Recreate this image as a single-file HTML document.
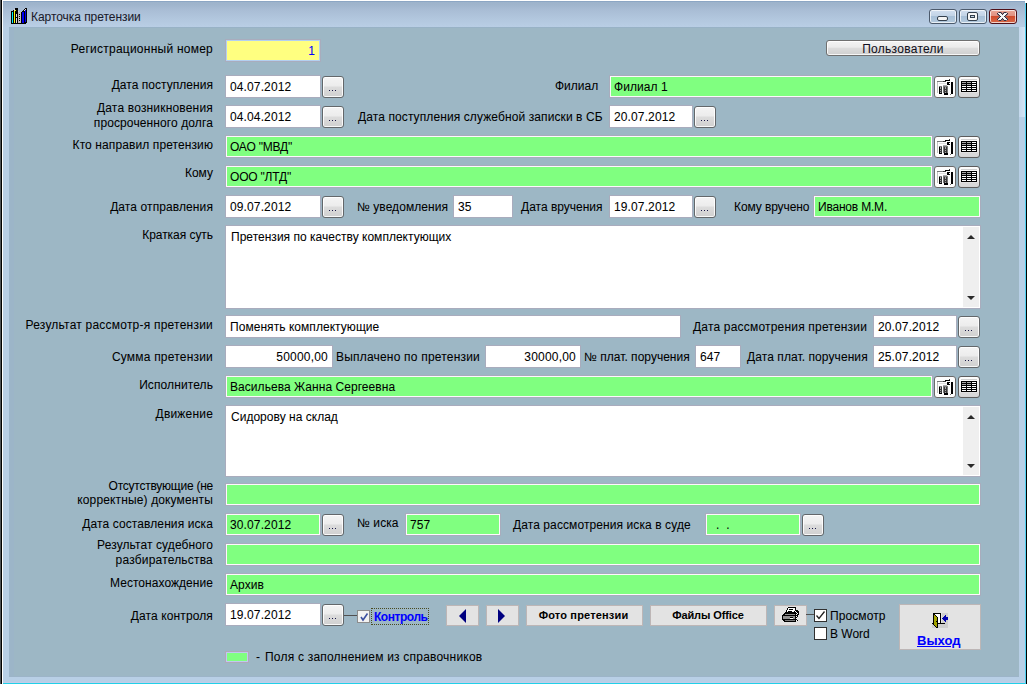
<!DOCTYPE html>
<html><head><meta charset="utf-8">
<style>
*{margin:0;padding:0;box-sizing:border-box}
html,body{width:1028px;height:684px;overflow:hidden;background:#fff}
body{position:relative;font-family:"Liberation Sans",sans-serif;font-size:12px;color:#000;-webkit-text-stroke:0.05px currentColor}
.pb,.nb{-webkit-text-stroke:0}
.a{position:absolute}
svg{position:absolute;display:block}
#frame{position:absolute;left:3px;top:1px;width:1022px;height:682px;background:#b8cfe6}
#title{position:absolute;left:3px;top:1px;width:1022px;height:26px;background:linear-gradient(#9cb2ca 0,#a0b5cd 4px,#a9bdd5 9px,#b2c7de 18px,#b9cee5 26px)}
#client{position:absolute;left:9px;top:27px;width:1010px;height:650px;background:#9db7c5}
.l{position:absolute;white-space:nowrap;font-size:12px;line-height:14px;color:#000}
.r{text-align:right;left:13px;width:200px}
.f{position:absolute;height:23px;border:1px solid #a9acbd;box-shadow:inset 0 0 0 1px #fff;background:#fff;white-space:nowrap;font-size:12px;letter-spacing:0.05px;line-height:22px;padding-left:4px;color:#000;overflow:hidden}
.g{background:#80ff80;box-shadow:inset 0 0 0 1px #fdf8fd}
.y{background:#ffff80;box-shadow:inset 0 0 0 1px #b4d0f0}
.num{text-align:right;padding-right:4px;padding-left:0}
.dt{letter-spacing:0.12px}
.b{position:absolute;width:22px;height:22px;border:1px solid #63676a;border-radius:3px;background:linear-gradient(#f4f4f4 0,#ececec 45%,#dcdcdc 50%,#d0d0d0 100%);box-shadow:inset 0 0 0 1px rgba(255,255,255,.85)}
.b::after{content:"";position:absolute;left:6px;top:13px;width:1px;height:1px;background:#181848;box-shadow:3px 0 0 #181848,6px 0 0 #181848}
.ib{position:absolute;width:22px;height:22px;border:1px solid #6a6a6a;border-radius:3px;background:#fdfdfd}
.memo{position:absolute;border:1px solid #a9acbd;background:#fff;font-size:12px;letter-spacing:0.02px;padding:4px 0 0 5px;line-height:14px;white-space:nowrap}
.sb{position:absolute;right:1px;top:1px;bottom:1px;width:16px;background:#efefef}
.up{position:absolute;left:4px;top:7px;width:8px;height:5px}
.dn{position:absolute;left:4px;bottom:6px;width:8px;height:5px}
.pb{position:absolute;background:#e3e3e3;border:1px solid #bdb6b6;font-weight:bold;font-size:11px;text-align:center;line-height:19px;letter-spacing:0.1px;color:#000}
.wb{position:absolute;top:9px;width:28px;height:15px;border:1px solid #4c5a6c;border-radius:3px;background:linear-gradient(#d2dff0 0,#c2d3e6 45%,#a8c0d8 50%,#b4cade 100%);box-shadow:inset 0 0 0 1px rgba(255,255,255,.7)}
</style></head><body>
<div id="frame"></div>
<div class="a" style="left:0px;top:0px;width:1px;height:684px;background:#505458"></div>
<div class="a" style="left:1px;top:0px;width:1px;height:684px;background:#000"></div>
<div class="a" style="left:2px;top:0px;width:1px;height:684px;background:#fff"></div>
<div class="a" style="left:3px;top:682px;width:1022px;height:1px;background:#c4cce8"></div>
<div class="a" style="left:3px;top:683px;width:1022px;height:1px;background:#20d0e8"></div>
<div class="a" style="left:1025px;top:3px;width:1px;height:681px;background:#50d0f0"></div>
<div class="a" style="left:1026px;top:3px;width:1px;height:681px;background:#000"></div>
<div class="a" style="left:1027px;top:0px;width:1px;height:684px;background:#fff"></div>
<div id="title"></div>
<div class="a" style="left:3px;top:1px;width:1022px;height:1px;background:#8ca6c4"></div>
<div class="a" style="left:1019px;top:27px;width:6px;height:90px;background:linear-gradient(90deg,#c4d8ec,#d4e4f4)"></div>
<svg style="left:11px;top:8px" width="16" height="16" viewBox="0 0 16 16" shape-rendering="crispEdges"><rect x="4" y="0" width="3" height="1" fill="#000"/><rect x="14" y="0" width="2" height="1" fill="#000"/><rect x="3" y="1" width="1" height="1" fill="#e0d8d8"/><rect x="4" y="1" width="3" height="1" fill="#000"/><rect x="13" y="1" width="1" height="1" fill="#000"/><rect x="14" y="1" width="1" height="1" fill="#e8d4dc"/><rect x="15" y="1" width="1" height="1" fill="#000"/><rect x="2" y="2" width="1" height="1" fill="#000"/><rect x="3" y="2" width="1" height="1" fill="#e0d8d8"/><rect x="4" y="2" width="1" height="1" fill="#f8f800"/><rect x="5" y="2" width="2" height="1" fill="#000"/><rect x="12" y="2" width="1" height="1" fill="#000"/><rect x="13" y="2" width="1" height="1" fill="#e8d4dc"/><rect x="14" y="2" width="1" height="1" fill="#0000f0"/><rect x="15" y="2" width="1" height="1" fill="#000"/><rect x="0" y="3" width="3" height="1" fill="#000"/><rect x="3" y="3" width="1" height="1" fill="#f8f800"/><rect x="4" y="3" width="3" height="1" fill="#000"/><rect x="7" y="3" width="1" height="1" fill="#e0d8d8"/><rect x="11" y="3" width="3" height="1" fill="#000"/><rect x="14" y="3" width="1" height="1" fill="#0000f0"/><rect x="15" y="3" width="1" height="1" fill="#000"/><rect x="0" y="4" width="1" height="1" fill="#000"/><rect x="1" y="4" width="1" height="1" fill="#00f0f8"/><rect x="2" y="4" width="1" height="1" fill="#000"/><rect x="3" y="4" width="1" height="1" fill="#f8f800"/><rect x="4" y="4" width="3" height="1" fill="#000"/><rect x="7" y="4" width="3" height="1" fill="#c4bcbc"/><rect x="10" y="4" width="1" height="1" fill="#000"/><rect x="11" y="4" width="2" height="1" fill="#0000f0"/><rect x="13" y="4" width="1" height="1" fill="#000"/><rect x="14" y="4" width="1" height="1" fill="#0000f0"/><rect x="15" y="4" width="1" height="1" fill="#000"/><rect x="0" y="5" width="1" height="1" fill="#000"/><rect x="1" y="5" width="1" height="1" fill="#00f0f8"/><rect x="2" y="5" width="1" height="1" fill="#000"/><rect x="3" y="5" width="1" height="1" fill="#f8f800"/><rect x="4" y="5" width="3" height="1" fill="#000"/><rect x="7" y="5" width="3" height="1" fill="#c4bcbc"/><rect x="10" y="5" width="1" height="1" fill="#000"/><rect x="11" y="5" width="2" height="1" fill="#0000f0"/><rect x="13" y="5" width="1" height="1" fill="#000"/><rect x="14" y="5" width="1" height="1" fill="#0000f0"/><rect x="15" y="5" width="1" height="1" fill="#000"/><rect x="0" y="6" width="1" height="1" fill="#000"/><rect x="1" y="6" width="1" height="1" fill="#00f0f8"/><rect x="2" y="6" width="1" height="1" fill="#000"/><rect x="3" y="6" width="1" height="1" fill="#f8f800"/><rect x="4" y="6" width="1" height="1" fill="#000"/><rect x="5" y="6" width="1" height="1" fill="#e0d8d8"/><rect x="6" y="6" width="1" height="1" fill="#000"/><rect x="7" y="6" width="1" height="1" fill="#c4bcbc"/><rect x="8" y="6" width="1" height="1" fill="#000"/><rect x="9" y="6" width="1" height="1" fill="#c4bcbc"/><rect x="10" y="6" width="1" height="1" fill="#000"/><rect x="11" y="6" width="2" height="1" fill="#0000f0"/><rect x="13" y="6" width="1" height="1" fill="#000"/><rect x="14" y="6" width="1" height="1" fill="#0000f0"/><rect x="15" y="6" width="1" height="1" fill="#000"/><rect x="0" y="7" width="1" height="1" fill="#000"/><rect x="1" y="7" width="1" height="1" fill="#00f0f8"/><rect x="2" y="7" width="1" height="1" fill="#000"/><rect x="3" y="7" width="1" height="1" fill="#f8f800"/><rect x="4" y="7" width="1" height="1" fill="#000"/><rect x="5" y="7" width="1" height="1" fill="#e0d8d8"/><rect x="6" y="7" width="1" height="1" fill="#000"/><rect x="7" y="7" width="3" height="1" fill="#c4bcbc"/><rect x="10" y="7" width="1" height="1" fill="#000"/><rect x="11" y="7" width="2" height="1" fill="#0000f0"/><rect x="13" y="7" width="1" height="1" fill="#000"/><rect x="14" y="7" width="1" height="1" fill="#0000f0"/><rect x="15" y="7" width="1" height="1" fill="#000"/><rect x="0" y="8" width="1" height="1" fill="#000"/><rect x="1" y="8" width="1" height="1" fill="#00f0f8"/><rect x="2" y="8" width="1" height="1" fill="#000"/><rect x="3" y="8" width="1" height="1" fill="#f8f800"/><rect x="4" y="8" width="1" height="1" fill="#000"/><rect x="5" y="8" width="1" height="1" fill="#e0d8d8"/><rect x="6" y="8" width="1" height="1" fill="#000"/><rect x="7" y="8" width="1" height="1" fill="#c4bcbc"/><rect x="8" y="8" width="1" height="1" fill="#000"/><rect x="9" y="8" width="1" height="1" fill="#c4bcbc"/><rect x="10" y="8" width="1" height="1" fill="#000"/><rect x="11" y="8" width="2" height="1" fill="#0000f0"/><rect x="13" y="8" width="1" height="1" fill="#000"/><rect x="14" y="8" width="1" height="1" fill="#0000f0"/><rect x="15" y="8" width="1" height="1" fill="#000"/><rect x="0" y="9" width="1" height="1" fill="#000"/><rect x="1" y="9" width="1" height="1" fill="#00f0f8"/><rect x="2" y="9" width="1" height="1" fill="#000"/><rect x="3" y="9" width="1" height="1" fill="#f8f800"/><rect x="4" y="9" width="3" height="1" fill="#000"/><rect x="7" y="9" width="3" height="1" fill="#c4bcbc"/><rect x="10" y="9" width="1" height="1" fill="#000"/><rect x="11" y="9" width="2" height="1" fill="#0000f0"/><rect x="13" y="9" width="1" height="1" fill="#000"/><rect x="14" y="9" width="1" height="1" fill="#0000f0"/><rect x="15" y="9" width="1" height="1" fill="#000"/><rect x="0" y="10" width="1" height="1" fill="#000"/><rect x="1" y="10" width="1" height="1" fill="#00f0f8"/><rect x="2" y="10" width="1" height="1" fill="#000"/><rect x="3" y="10" width="1" height="1" fill="#f8f800"/><rect x="4" y="10" width="1" height="1" fill="#000"/><rect x="5" y="10" width="1" height="1" fill="#e0d8d8"/><rect x="6" y="10" width="1" height="1" fill="#000"/><rect x="7" y="10" width="1" height="1" fill="#c4bcbc"/><rect x="8" y="10" width="1" height="1" fill="#000"/><rect x="9" y="10" width="1" height="1" fill="#c4bcbc"/><rect x="10" y="10" width="1" height="1" fill="#000"/><rect x="11" y="10" width="2" height="1" fill="#0000f0"/><rect x="13" y="10" width="1" height="1" fill="#000"/><rect x="14" y="10" width="1" height="1" fill="#0000f0"/><rect x="15" y="10" width="1" height="1" fill="#000"/><rect x="0" y="11" width="1" height="1" fill="#000"/><rect x="1" y="11" width="1" height="1" fill="#00f0f8"/><rect x="2" y="11" width="1" height="1" fill="#000"/><rect x="3" y="11" width="1" height="1" fill="#f8f800"/><rect x="4" y="11" width="1" height="1" fill="#000"/><rect x="5" y="11" width="1" height="1" fill="#e0d8d8"/><rect x="6" y="11" width="1" height="1" fill="#000"/><rect x="7" y="11" width="3" height="1" fill="#c4bcbc"/><rect x="10" y="11" width="1" height="1" fill="#000"/><rect x="11" y="11" width="2" height="1" fill="#0000f0"/><rect x="13" y="11" width="1" height="1" fill="#000"/><rect x="14" y="11" width="1" height="1" fill="#0000f0"/><rect x="15" y="11" width="1" height="1" fill="#000"/><rect x="0" y="12" width="1" height="1" fill="#000"/><rect x="1" y="12" width="1" height="1" fill="#00f0f8"/><rect x="2" y="12" width="1" height="1" fill="#000"/><rect x="3" y="12" width="1" height="1" fill="#f8f800"/><rect x="4" y="12" width="1" height="1" fill="#000"/><rect x="5" y="12" width="1" height="1" fill="#e0d8d8"/><rect x="6" y="12" width="1" height="1" fill="#000"/><rect x="7" y="12" width="1" height="1" fill="#c4bcbc"/><rect x="8" y="12" width="1" height="1" fill="#000"/><rect x="9" y="12" width="1" height="1" fill="#c4bcbc"/><rect x="10" y="12" width="1" height="1" fill="#000"/><rect x="11" y="12" width="2" height="1" fill="#0000f0"/><rect x="13" y="12" width="1" height="1" fill="#000"/><rect x="14" y="12" width="1" height="1" fill="#0000f0"/><rect x="15" y="12" width="1" height="1" fill="#000"/><rect x="0" y="13" width="1" height="1" fill="#000"/><rect x="1" y="13" width="1" height="1" fill="#00f0f8"/><rect x="2" y="13" width="1" height="1" fill="#000"/><rect x="3" y="13" width="1" height="1" fill="#f8f800"/><rect x="4" y="13" width="1" height="1" fill="#000"/><rect x="5" y="13" width="1" height="1" fill="#e0d8d8"/><rect x="6" y="13" width="1" height="1" fill="#000"/><rect x="7" y="13" width="3" height="1" fill="#c4bcbc"/><rect x="10" y="13" width="1" height="1" fill="#000"/><rect x="11" y="13" width="2" height="1" fill="#0000f0"/><rect x="13" y="13" width="1" height="1" fill="#000"/><rect x="14" y="13" width="1" height="1" fill="#0000f0"/><rect x="15" y="13" width="1" height="1" fill="#000"/><rect x="0" y="14" width="1" height="1" fill="#000"/><rect x="1" y="14" width="1" height="1" fill="#00f0f8"/><rect x="2" y="14" width="1" height="1" fill="#000"/><rect x="3" y="14" width="1" height="1" fill="#f8f800"/><rect x="4" y="14" width="1" height="1" fill="#000"/><rect x="5" y="14" width="1" height="1" fill="#e0d8d8"/><rect x="6" y="14" width="1" height="1" fill="#000"/><rect x="7" y="14" width="3" height="1" fill="#c4bcbc"/><rect x="10" y="14" width="1" height="1" fill="#000"/><rect x="11" y="14" width="2" height="1" fill="#0000f0"/><rect x="13" y="14" width="3" height="1" fill="#000"/><rect x="0" y="15" width="15" height="1" fill="#000"/></svg>
<div class="l" style="left:31px;top:10px;letter-spacing:-0.05px;color:#1a1a2a">Карточка претензии</div>
<div class="wb" style="left:929px"><div class="a" style="left:7px;top:6px;width:11px;height:5px;border:1px solid #34404e;border-radius:2px;background:#f4f4f4"></div></div>
<div class="wb" style="left:959px"><div class="a" style="left:7px;top:2px;width:11px;height:9px;border:1px solid #34404e;border-radius:2px;background:#f6f6f6"><div class="a" style="left:2px;top:2px;width:5px;height:3px;border:1px solid #34404e;background:#c8d8e8"></div></div></div>
<div class="wb" style="left:989px;border-color:#501018;background:linear-gradient(#eaa898 0,#e09080 45%,#d04c2c 50%,#d86848 100%)"><svg style="left:7px;top:2px" width="11" height="9" viewBox="0 0 11 9" shape-rendering="crispEdges"><rect x="1" y="0" width="1" height="1" fill="#8a6a70"/><rect x="2" y="0" width="2" height="1" fill="#3a3040"/><rect x="4" y="0" width="1" height="1" fill="#8a6a70"/><rect x="6" y="0" width="1" height="1" fill="#8a6a70"/><rect x="7" y="0" width="2" height="1" fill="#3a3040"/><rect x="9" y="0" width="1" height="1" fill="#8a6a70"/><rect x="0" y="1" width="1" height="1" fill="#3a3040"/><rect x="1" y="1" width="3" height="1" fill="#f6f6f6"/><rect x="4" y="1" width="1" height="1" fill="#3a3040"/><rect x="5" y="1" width="1" height="1" fill="#8a6a70"/><rect x="6" y="1" width="1" height="1" fill="#3a3040"/><rect x="7" y="1" width="3" height="1" fill="#f6f6f6"/><rect x="10" y="1" width="1" height="1" fill="#3a3040"/><rect x="0" y="2" width="1" height="1" fill="#8a6a70"/><rect x="1" y="2" width="1" height="1" fill="#3a3040"/><rect x="2" y="2" width="3" height="1" fill="#f6f6f6"/><rect x="5" y="2" width="1" height="1" fill="#3a3040"/><rect x="6" y="2" width="3" height="1" fill="#f6f6f6"/><rect x="9" y="2" width="1" height="1" fill="#3a3040"/><rect x="10" y="2" width="1" height="1" fill="#8a6a70"/><rect x="1" y="3" width="1" height="1" fill="#8a6a70"/><rect x="2" y="3" width="1" height="1" fill="#3a3040"/><rect x="3" y="3" width="5" height="1" fill="#f6f6f6"/><rect x="8" y="3" width="1" height="1" fill="#3a3040"/><rect x="9" y="3" width="1" height="1" fill="#8a6a70"/><rect x="2" y="4" width="1" height="1" fill="#8a6a70"/><rect x="3" y="4" width="1" height="1" fill="#3a3040"/><rect x="4" y="4" width="3" height="1" fill="#f6f6f6"/><rect x="7" y="4" width="1" height="1" fill="#3a3040"/><rect x="8" y="4" width="1" height="1" fill="#8a6a70"/><rect x="1" y="5" width="1" height="1" fill="#8a6a70"/><rect x="2" y="5" width="1" height="1" fill="#3a3040"/><rect x="3" y="5" width="5" height="1" fill="#f6f6f6"/><rect x="8" y="5" width="1" height="1" fill="#3a3040"/><rect x="9" y="5" width="1" height="1" fill="#8a6a70"/><rect x="0" y="6" width="1" height="1" fill="#8a6a70"/><rect x="1" y="6" width="1" height="1" fill="#3a3040"/><rect x="2" y="6" width="3" height="1" fill="#f6f6f6"/><rect x="5" y="6" width="1" height="1" fill="#3a3040"/><rect x="6" y="6" width="3" height="1" fill="#f6f6f6"/><rect x="9" y="6" width="1" height="1" fill="#3a3040"/><rect x="10" y="6" width="1" height="1" fill="#8a6a70"/><rect x="0" y="7" width="1" height="1" fill="#3a3040"/><rect x="1" y="7" width="3" height="1" fill="#f6f6f6"/><rect x="4" y="7" width="1" height="1" fill="#3a3040"/><rect x="5" y="7" width="1" height="1" fill="#8a6a70"/><rect x="6" y="7" width="1" height="1" fill="#3a3040"/><rect x="7" y="7" width="3" height="1" fill="#f6f6f6"/><rect x="10" y="7" width="1" height="1" fill="#3a3040"/><rect x="1" y="8" width="1" height="1" fill="#8a6a70"/><rect x="2" y="8" width="2" height="1" fill="#3a3040"/><rect x="4" y="8" width="1" height="1" fill="#8a6a70"/><rect x="6" y="8" width="1" height="1" fill="#8a6a70"/><rect x="7" y="8" width="2" height="1" fill="#3a3040"/><rect x="9" y="8" width="1" height="1" fill="#8a6a70"/></svg></div>
<div id="client"></div>
<div class="a" style="left:9px;top:27px;width:1px;height:650px;background:#9cb6cc"></div>
<div class="a" style="left:10px;top:28px;width:4px;height:648px;background:#9cb5c8"></div>
<div class="a" style="left:9px;top:27px;width:1010px;height:1px;background:#98b2c6"></div>
<div class="a" style="left:9px;top:676px;width:1010px;height:1px;background:#9cb4c8"></div>
<div class="l r" style="top:42px;letter-spacing:0.24px">Регистрационный номер</div>
<div class="l r" style="top:78px;letter-spacing:0.04px">Дата поступления</div>
<div class="l r" style="top:101px;letter-spacing:0.18px">Дата возникновения</div>
<div class="l r" style="top:116px;letter-spacing:0.11px">просроченного долга</div>
<div class="l r" style="top:138px;letter-spacing:0.1px">Кто направил претензию</div>
<div class="l r" style="top:166px;letter-spacing:0px">Кому</div>
<div class="l r" style="top:200px;letter-spacing:0.1px">Дата отправления</div>
<div class="l r" style="top:228px;letter-spacing:-0.05px">Краткая суть</div>
<div class="l r" style="top:318px;letter-spacing:0.22px">Результат рассмотр-я претензии</div>
<div class="l r" style="top:350px;letter-spacing:0.2px">Сумма претензии</div>
<div class="l r" style="top:378px;letter-spacing:0.1px">Исполнитель</div>
<div class="l r" style="top:407px;letter-spacing:0.19px">Движение</div>
<div class="l r" style="top:479px;letter-spacing:-0.24px">Отсутствующие (не</div>
<div class="l r" style="top:493px;letter-spacing:0.14px">корректные) документы</div>
<div class="l r" style="top:517px;letter-spacing:0.1px">Дата составления иска</div>
<div class="l r" style="top:538px;letter-spacing:0.1px">Результат судебного</div>
<div class="l r" style="top:553px;letter-spacing:0.19px">разбирательства</div>
<div class="l r" style="top:576px;letter-spacing:0.05px">Местонахождение</div>
<div class="l r" style="top:609px;letter-spacing:0.13px">Дата контроля</div>
<div class="f y num" style="left:225px;top:39px;width:96px;padding-right:5px;color:#0000ff">1</div>
<div class="f dt" style="left:225px;top:75px;width:96px">04.07.2012</div>
<div class="b" style="left:322px;top:76px"></div>
<div class="f dt" style="left:225px;top:105px;width:96px">04.04.2012</div>
<div class="b" style="left:322px;top:106px"></div>
<div class="f g" style="left:225px;top:135px;width:708px;letter-spacing:-0.2px">ОАО "МВД"</div>
<div class="f g" style="left:225px;top:165px;width:708px;letter-spacing:-0.2px">ООО "ЛТД"</div>
<div class="f dt" style="left:225px;top:195px;width:96px">09.07.2012</div>
<div class="b" style="left:322px;top:196px"></div>
<div class="memo" style="left:225px;top:225px;width:756px;height:84px">Претензия по качеству комплектующих<div class="sb"><svg class="up" viewBox="0 0 8 5"><path d="M0 5 L4 1 L8 5 Z" fill="#2a2a2a"/></svg><svg class="dn" viewBox="0 0 8 5"><path d="M0 0 L4 4 L8 0 Z" fill="#2a2a2a"/></svg></div></div>
<div class="f " style="left:225px;top:315px;width:456px">Поменять комплектующие</div>
<div class="f num" style="left:225px;top:345px;width:108px;letter-spacing:0.2px">50000,00</div>
<div class="f g" style="left:225px;top:375px;width:708px">Васильева Жанна Сергеевна</div>
<div class="memo" style="left:225px;top:405px;width:756px;height:72px">Сидорову на склад<div class="sb"><svg class="up" viewBox="0 0 8 5"><path d="M0 5 L4 1 L8 5 Z" fill="#2a2a2a"/></svg><svg class="dn" viewBox="0 0 8 5"><path d="M0 0 L4 4 L8 0 Z" fill="#2a2a2a"/></svg></div></div>
<div class="f g" style="left:225px;top:483px;width:756px"></div>
<div class="f g dt" style="left:225px;top:513px;width:96px">30.07.2012</div>
<div class="b" style="left:322px;top:514px"></div>
<div class="f g" style="left:225px;top:543px;width:756px"></div>
<div class="f g" style="left:225px;top:573px;width:756px">Архив</div>
<div class="f dt" style="left:225px;top:603px;width:96px">19.07.2012</div>
<div class="b" style="left:322px;top:604px"></div>
<div class="a" style="left:826px;top:40px;width:154px;height:16px;border:1px solid #707070;border-radius:3px;background:linear-gradient(#f4f4f4,#ebebeb 45%,#dddddd 50%,#cfcfcf);box-shadow:inset 0 0 0 1px rgba(255,255,255,.8);text-align:center;line-height:15px;padding-top:1px;font-size:12px;letter-spacing:0.28px;color:#101020">Пользователи</div>
<div class="l" style="left:555px;top:79px;letter-spacing:0px">Филиал</div>
<div class="f g" style="left:609px;top:75px;width:324px">Филиал 1</div>
<div class="ib" style="left:934px;top:76px"><svg style="left:-1px;top:-1px" width="22" height="22" viewBox="0 0 22 22" shape-rendering="crispEdges"><rect x="15" y="3" width="1" height="1" fill="#383838"/><rect x="11" y="4" width="5" height="1" fill="#000"/><rect x="3" y="5" width="6" height="1" fill="#787878"/><rect x="9" y="5" width="3" height="1" fill="#383838"/><rect x="3" y="6" width="1" height="1" fill="#c0c0c0"/><rect x="13" y="6" width="3" height="1" fill="#000"/><rect x="17" y="6" width="2" height="1" fill="#000"/><rect x="3" y="7" width="1" height="1" fill="#c0c0c0"/><rect x="5" y="7" width="8" height="1" fill="#e0e0e0"/><rect x="13" y="7" width="2" height="1" fill="#000"/><rect x="15" y="7" width="1" height="1" fill="#fff"/><rect x="17" y="7" width="2" height="1" fill="#000"/><rect x="3" y="8" width="1" height="1" fill="#c0c0c0"/><rect x="13" y="8" width="3" height="1" fill="#000"/><rect x="17" y="8" width="2" height="1" fill="#000"/><rect x="3" y="9" width="1" height="1" fill="#c0c0c0"/><rect x="9" y="9" width="4" height="1" fill="#a8a8a8"/><rect x="17" y="9" width="2" height="1" fill="#000"/><rect x="3" y="10" width="1" height="1" fill="#c0c0c0"/><rect x="5" y="10" width="3" height="1" fill="#787878"/><rect x="9" y="10" width="5" height="1" fill="#787878"/><rect x="17" y="10" width="2" height="1" fill="#000"/><rect x="3" y="11" width="1" height="1" fill="#c0c0c0"/><rect x="5" y="11" width="1" height="1" fill="#000"/><rect x="6" y="11" width="1" height="1" fill="#a8a8a8"/><rect x="7" y="11" width="1" height="1" fill="#383838"/><rect x="9" y="11" width="1" height="1" fill="#787878"/><rect x="10" y="11" width="1" height="1" fill="#383838"/><rect x="11" y="11" width="1" height="1" fill="#a8a8a8"/><rect x="12" y="11" width="1" height="1" fill="#383838"/><rect x="13" y="11" width="1" height="1" fill="#787878"/><rect x="17" y="11" width="2" height="1" fill="#000"/><rect x="3" y="12" width="1" height="1" fill="#c0c0c0"/><rect x="5" y="12" width="1" height="1" fill="#000"/><rect x="6" y="12" width="1" height="1" fill="#a8a8a8"/><rect x="7" y="12" width="1" height="1" fill="#383838"/><rect x="9" y="12" width="1" height="1" fill="#787878"/><rect x="10" y="12" width="1" height="1" fill="#383838"/><rect x="11" y="12" width="1" height="1" fill="#a8a8a8"/><rect x="12" y="12" width="1" height="1" fill="#383838"/><rect x="13" y="12" width="1" height="1" fill="#787878"/><rect x="17" y="12" width="2" height="1" fill="#000"/><rect x="3" y="13" width="1" height="1" fill="#c0c0c0"/><rect x="5" y="13" width="1" height="1" fill="#000"/><rect x="6" y="13" width="2" height="1" fill="#383838"/><rect x="9" y="13" width="1" height="1" fill="#787878"/><rect x="10" y="13" width="3" height="1" fill="#383838"/><rect x="13" y="13" width="1" height="1" fill="#787878"/><rect x="17" y="13" width="2" height="1" fill="#000"/><rect x="3" y="14" width="1" height="1" fill="#c0c0c0"/><rect x="5" y="14" width="1" height="1" fill="#000"/><rect x="6" y="14" width="1" height="1" fill="#a8a8a8"/><rect x="7" y="14" width="1" height="1" fill="#383838"/><rect x="9" y="14" width="1" height="1" fill="#787878"/><rect x="10" y="14" width="1" height="1" fill="#383838"/><rect x="11" y="14" width="1" height="1" fill="#a8a8a8"/><rect x="12" y="14" width="1" height="1" fill="#383838"/><rect x="13" y="14" width="1" height="1" fill="#787878"/><rect x="17" y="14" width="2" height="1" fill="#000"/><rect x="3" y="15" width="1" height="1" fill="#c0c0c0"/><rect x="5" y="15" width="1" height="1" fill="#000"/><rect x="6" y="15" width="2" height="1" fill="#383838"/><rect x="9" y="15" width="1" height="1" fill="#787878"/><rect x="10" y="15" width="3" height="1" fill="#383838"/><rect x="13" y="15" width="1" height="1" fill="#787878"/><rect x="17" y="15" width="2" height="1" fill="#000"/><rect x="3" y="16" width="1" height="1" fill="#c0c0c0"/><rect x="5" y="16" width="1" height="1" fill="#000"/><rect x="6" y="16" width="1" height="1" fill="#a8a8a8"/><rect x="7" y="16" width="1" height="1" fill="#383838"/><rect x="9" y="16" width="1" height="1" fill="#787878"/><rect x="10" y="16" width="1" height="1" fill="#383838"/><rect x="11" y="16" width="1" height="1" fill="#a8a8a8"/><rect x="12" y="16" width="1" height="1" fill="#383838"/><rect x="13" y="16" width="1" height="1" fill="#787878"/><rect x="17" y="16" width="2" height="1" fill="#000"/><rect x="5" y="17" width="3" height="1" fill="#000"/><rect x="10" y="17" width="4" height="1" fill="#000"/><rect x="17" y="17" width="2" height="1" fill="#000"/><rect x="10" y="18" width="4" height="1" fill="#000"/><rect x="16" y="18" width="1" height="1" fill="#787878"/></svg></div>
<div class="ib" style="left:958px;top:76px;background:linear-gradient(#fdfdfd 0,#f4f4f4 50%,#e0e0e0 80%,#d4d4d4 100%);border-color:#5c5c5c"><svg style="left:-1px;top:-1px" width="22" height="22" viewBox="0 0 22 22" shape-rendering="crispEdges"><rect x="3" y="3" width="16" height="1" fill="#d0d0d0"/><rect x="3" y="5" width="16" height="1" fill="#000"/><rect x="3" y="6" width="1" height="1" fill="#000"/><rect x="4" y="6" width="4" height="1" fill="#a8a8a8"/><rect x="8" y="6" width="1" height="1" fill="#000"/><rect x="9" y="6" width="4" height="1" fill="#a8a8a8"/><rect x="13" y="6" width="1" height="1" fill="#000"/><rect x="14" y="6" width="4" height="1" fill="#fff"/><rect x="18" y="6" width="1" height="1" fill="#000"/><rect x="3" y="7" width="16" height="1" fill="#000"/><rect x="3" y="8" width="1" height="1" fill="#000"/><rect x="4" y="8" width="4" height="1" fill="#a8a8a8"/><rect x="8" y="8" width="1" height="1" fill="#000"/><rect x="9" y="8" width="4" height="1" fill="#a8a8a8"/><rect x="13" y="8" width="1" height="1" fill="#000"/><rect x="14" y="8" width="4" height="1" fill="#fff"/><rect x="18" y="8" width="1" height="1" fill="#000"/><rect x="3" y="9" width="16" height="1" fill="#000"/><rect x="3" y="10" width="1" height="1" fill="#000"/><rect x="4" y="10" width="4" height="1" fill="#fff"/><rect x="8" y="10" width="1" height="1" fill="#000"/><rect x="9" y="10" width="4" height="1" fill="#fff"/><rect x="13" y="10" width="1" height="1" fill="#000"/><rect x="14" y="10" width="4" height="1" fill="#fff"/><rect x="18" y="10" width="1" height="1" fill="#000"/><rect x="3" y="11" width="16" height="1" fill="#000"/><rect x="3" y="12" width="1" height="1" fill="#000"/><rect x="4" y="12" width="4" height="1" fill="#fff"/><rect x="8" y="12" width="1" height="1" fill="#000"/><rect x="9" y="12" width="4" height="1" fill="#fff"/><rect x="13" y="12" width="1" height="1" fill="#000"/><rect x="14" y="12" width="4" height="1" fill="#fff"/><rect x="18" y="12" width="1" height="1" fill="#000"/><rect x="3" y="13" width="16" height="1" fill="#000"/><rect x="3" y="14" width="1" height="1" fill="#000"/><rect x="4" y="14" width="4" height="1" fill="#fff"/><rect x="8" y="14" width="1" height="1" fill="#000"/><rect x="9" y="14" width="4" height="1" fill="#fff"/><rect x="13" y="14" width="1" height="1" fill="#000"/><rect x="14" y="14" width="4" height="1" fill="#fff"/><rect x="18" y="14" width="1" height="1" fill="#000"/><rect x="3" y="15" width="16" height="1" fill="#000"/><rect x="2" y="17" width="18" height="1" fill="#d8d8d8"/><rect x="2" y="18" width="18" height="1" fill="#d8d8d8"/><rect x="2" y="19" width="18" height="1" fill="#d8d8d8"/></svg></div>
<div class="l" style="left:358px;top:110px;letter-spacing:0.1px">Дата поступления служебной записки в СБ</div>
<div class="f dt" style="left:609px;top:105px;width:84px">20.07.2012</div>
<div class="b" style="left:694px;top:106px"></div>
<div class="ib" style="left:934px;top:136px"><svg style="left:-1px;top:-1px" width="22" height="22" viewBox="0 0 22 22" shape-rendering="crispEdges"><rect x="15" y="3" width="1" height="1" fill="#383838"/><rect x="11" y="4" width="5" height="1" fill="#000"/><rect x="3" y="5" width="6" height="1" fill="#787878"/><rect x="9" y="5" width="3" height="1" fill="#383838"/><rect x="3" y="6" width="1" height="1" fill="#c0c0c0"/><rect x="13" y="6" width="3" height="1" fill="#000"/><rect x="17" y="6" width="2" height="1" fill="#000"/><rect x="3" y="7" width="1" height="1" fill="#c0c0c0"/><rect x="5" y="7" width="8" height="1" fill="#e0e0e0"/><rect x="13" y="7" width="2" height="1" fill="#000"/><rect x="15" y="7" width="1" height="1" fill="#fff"/><rect x="17" y="7" width="2" height="1" fill="#000"/><rect x="3" y="8" width="1" height="1" fill="#c0c0c0"/><rect x="13" y="8" width="3" height="1" fill="#000"/><rect x="17" y="8" width="2" height="1" fill="#000"/><rect x="3" y="9" width="1" height="1" fill="#c0c0c0"/><rect x="9" y="9" width="4" height="1" fill="#a8a8a8"/><rect x="17" y="9" width="2" height="1" fill="#000"/><rect x="3" y="10" width="1" height="1" fill="#c0c0c0"/><rect x="5" y="10" width="3" height="1" fill="#787878"/><rect x="9" y="10" width="5" height="1" fill="#787878"/><rect x="17" y="10" width="2" height="1" fill="#000"/><rect x="3" y="11" width="1" height="1" fill="#c0c0c0"/><rect x="5" y="11" width="1" height="1" fill="#000"/><rect x="6" y="11" width="1" height="1" fill="#a8a8a8"/><rect x="7" y="11" width="1" height="1" fill="#383838"/><rect x="9" y="11" width="1" height="1" fill="#787878"/><rect x="10" y="11" width="1" height="1" fill="#383838"/><rect x="11" y="11" width="1" height="1" fill="#a8a8a8"/><rect x="12" y="11" width="1" height="1" fill="#383838"/><rect x="13" y="11" width="1" height="1" fill="#787878"/><rect x="17" y="11" width="2" height="1" fill="#000"/><rect x="3" y="12" width="1" height="1" fill="#c0c0c0"/><rect x="5" y="12" width="1" height="1" fill="#000"/><rect x="6" y="12" width="1" height="1" fill="#a8a8a8"/><rect x="7" y="12" width="1" height="1" fill="#383838"/><rect x="9" y="12" width="1" height="1" fill="#787878"/><rect x="10" y="12" width="1" height="1" fill="#383838"/><rect x="11" y="12" width="1" height="1" fill="#a8a8a8"/><rect x="12" y="12" width="1" height="1" fill="#383838"/><rect x="13" y="12" width="1" height="1" fill="#787878"/><rect x="17" y="12" width="2" height="1" fill="#000"/><rect x="3" y="13" width="1" height="1" fill="#c0c0c0"/><rect x="5" y="13" width="1" height="1" fill="#000"/><rect x="6" y="13" width="2" height="1" fill="#383838"/><rect x="9" y="13" width="1" height="1" fill="#787878"/><rect x="10" y="13" width="3" height="1" fill="#383838"/><rect x="13" y="13" width="1" height="1" fill="#787878"/><rect x="17" y="13" width="2" height="1" fill="#000"/><rect x="3" y="14" width="1" height="1" fill="#c0c0c0"/><rect x="5" y="14" width="1" height="1" fill="#000"/><rect x="6" y="14" width="1" height="1" fill="#a8a8a8"/><rect x="7" y="14" width="1" height="1" fill="#383838"/><rect x="9" y="14" width="1" height="1" fill="#787878"/><rect x="10" y="14" width="1" height="1" fill="#383838"/><rect x="11" y="14" width="1" height="1" fill="#a8a8a8"/><rect x="12" y="14" width="1" height="1" fill="#383838"/><rect x="13" y="14" width="1" height="1" fill="#787878"/><rect x="17" y="14" width="2" height="1" fill="#000"/><rect x="3" y="15" width="1" height="1" fill="#c0c0c0"/><rect x="5" y="15" width="1" height="1" fill="#000"/><rect x="6" y="15" width="2" height="1" fill="#383838"/><rect x="9" y="15" width="1" height="1" fill="#787878"/><rect x="10" y="15" width="3" height="1" fill="#383838"/><rect x="13" y="15" width="1" height="1" fill="#787878"/><rect x="17" y="15" width="2" height="1" fill="#000"/><rect x="3" y="16" width="1" height="1" fill="#c0c0c0"/><rect x="5" y="16" width="1" height="1" fill="#000"/><rect x="6" y="16" width="1" height="1" fill="#a8a8a8"/><rect x="7" y="16" width="1" height="1" fill="#383838"/><rect x="9" y="16" width="1" height="1" fill="#787878"/><rect x="10" y="16" width="1" height="1" fill="#383838"/><rect x="11" y="16" width="1" height="1" fill="#a8a8a8"/><rect x="12" y="16" width="1" height="1" fill="#383838"/><rect x="13" y="16" width="1" height="1" fill="#787878"/><rect x="17" y="16" width="2" height="1" fill="#000"/><rect x="5" y="17" width="3" height="1" fill="#000"/><rect x="10" y="17" width="4" height="1" fill="#000"/><rect x="17" y="17" width="2" height="1" fill="#000"/><rect x="10" y="18" width="4" height="1" fill="#000"/><rect x="16" y="18" width="1" height="1" fill="#787878"/></svg></div>
<div class="ib" style="left:958px;top:136px;background:linear-gradient(#fdfdfd 0,#f4f4f4 50%,#e0e0e0 80%,#d4d4d4 100%);border-color:#5c5c5c"><svg style="left:-1px;top:-1px" width="22" height="22" viewBox="0 0 22 22" shape-rendering="crispEdges"><rect x="3" y="3" width="16" height="1" fill="#d0d0d0"/><rect x="3" y="5" width="16" height="1" fill="#000"/><rect x="3" y="6" width="1" height="1" fill="#000"/><rect x="4" y="6" width="4" height="1" fill="#a8a8a8"/><rect x="8" y="6" width="1" height="1" fill="#000"/><rect x="9" y="6" width="4" height="1" fill="#a8a8a8"/><rect x="13" y="6" width="1" height="1" fill="#000"/><rect x="14" y="6" width="4" height="1" fill="#fff"/><rect x="18" y="6" width="1" height="1" fill="#000"/><rect x="3" y="7" width="16" height="1" fill="#000"/><rect x="3" y="8" width="1" height="1" fill="#000"/><rect x="4" y="8" width="4" height="1" fill="#a8a8a8"/><rect x="8" y="8" width="1" height="1" fill="#000"/><rect x="9" y="8" width="4" height="1" fill="#a8a8a8"/><rect x="13" y="8" width="1" height="1" fill="#000"/><rect x="14" y="8" width="4" height="1" fill="#fff"/><rect x="18" y="8" width="1" height="1" fill="#000"/><rect x="3" y="9" width="16" height="1" fill="#000"/><rect x="3" y="10" width="1" height="1" fill="#000"/><rect x="4" y="10" width="4" height="1" fill="#fff"/><rect x="8" y="10" width="1" height="1" fill="#000"/><rect x="9" y="10" width="4" height="1" fill="#fff"/><rect x="13" y="10" width="1" height="1" fill="#000"/><rect x="14" y="10" width="4" height="1" fill="#fff"/><rect x="18" y="10" width="1" height="1" fill="#000"/><rect x="3" y="11" width="16" height="1" fill="#000"/><rect x="3" y="12" width="1" height="1" fill="#000"/><rect x="4" y="12" width="4" height="1" fill="#fff"/><rect x="8" y="12" width="1" height="1" fill="#000"/><rect x="9" y="12" width="4" height="1" fill="#fff"/><rect x="13" y="12" width="1" height="1" fill="#000"/><rect x="14" y="12" width="4" height="1" fill="#fff"/><rect x="18" y="12" width="1" height="1" fill="#000"/><rect x="3" y="13" width="16" height="1" fill="#000"/><rect x="3" y="14" width="1" height="1" fill="#000"/><rect x="4" y="14" width="4" height="1" fill="#fff"/><rect x="8" y="14" width="1" height="1" fill="#000"/><rect x="9" y="14" width="4" height="1" fill="#fff"/><rect x="13" y="14" width="1" height="1" fill="#000"/><rect x="14" y="14" width="4" height="1" fill="#fff"/><rect x="18" y="14" width="1" height="1" fill="#000"/><rect x="3" y="15" width="16" height="1" fill="#000"/><rect x="2" y="17" width="18" height="1" fill="#d8d8d8"/><rect x="2" y="18" width="18" height="1" fill="#d8d8d8"/><rect x="2" y="19" width="18" height="1" fill="#d8d8d8"/></svg></div>
<div class="ib" style="left:934px;top:166px"><svg style="left:-1px;top:-1px" width="22" height="22" viewBox="0 0 22 22" shape-rendering="crispEdges"><rect x="15" y="3" width="1" height="1" fill="#383838"/><rect x="11" y="4" width="5" height="1" fill="#000"/><rect x="3" y="5" width="6" height="1" fill="#787878"/><rect x="9" y="5" width="3" height="1" fill="#383838"/><rect x="3" y="6" width="1" height="1" fill="#c0c0c0"/><rect x="13" y="6" width="3" height="1" fill="#000"/><rect x="17" y="6" width="2" height="1" fill="#000"/><rect x="3" y="7" width="1" height="1" fill="#c0c0c0"/><rect x="5" y="7" width="8" height="1" fill="#e0e0e0"/><rect x="13" y="7" width="2" height="1" fill="#000"/><rect x="15" y="7" width="1" height="1" fill="#fff"/><rect x="17" y="7" width="2" height="1" fill="#000"/><rect x="3" y="8" width="1" height="1" fill="#c0c0c0"/><rect x="13" y="8" width="3" height="1" fill="#000"/><rect x="17" y="8" width="2" height="1" fill="#000"/><rect x="3" y="9" width="1" height="1" fill="#c0c0c0"/><rect x="9" y="9" width="4" height="1" fill="#a8a8a8"/><rect x="17" y="9" width="2" height="1" fill="#000"/><rect x="3" y="10" width="1" height="1" fill="#c0c0c0"/><rect x="5" y="10" width="3" height="1" fill="#787878"/><rect x="9" y="10" width="5" height="1" fill="#787878"/><rect x="17" y="10" width="2" height="1" fill="#000"/><rect x="3" y="11" width="1" height="1" fill="#c0c0c0"/><rect x="5" y="11" width="1" height="1" fill="#000"/><rect x="6" y="11" width="1" height="1" fill="#a8a8a8"/><rect x="7" y="11" width="1" height="1" fill="#383838"/><rect x="9" y="11" width="1" height="1" fill="#787878"/><rect x="10" y="11" width="1" height="1" fill="#383838"/><rect x="11" y="11" width="1" height="1" fill="#a8a8a8"/><rect x="12" y="11" width="1" height="1" fill="#383838"/><rect x="13" y="11" width="1" height="1" fill="#787878"/><rect x="17" y="11" width="2" height="1" fill="#000"/><rect x="3" y="12" width="1" height="1" fill="#c0c0c0"/><rect x="5" y="12" width="1" height="1" fill="#000"/><rect x="6" y="12" width="1" height="1" fill="#a8a8a8"/><rect x="7" y="12" width="1" height="1" fill="#383838"/><rect x="9" y="12" width="1" height="1" fill="#787878"/><rect x="10" y="12" width="1" height="1" fill="#383838"/><rect x="11" y="12" width="1" height="1" fill="#a8a8a8"/><rect x="12" y="12" width="1" height="1" fill="#383838"/><rect x="13" y="12" width="1" height="1" fill="#787878"/><rect x="17" y="12" width="2" height="1" fill="#000"/><rect x="3" y="13" width="1" height="1" fill="#c0c0c0"/><rect x="5" y="13" width="1" height="1" fill="#000"/><rect x="6" y="13" width="2" height="1" fill="#383838"/><rect x="9" y="13" width="1" height="1" fill="#787878"/><rect x="10" y="13" width="3" height="1" fill="#383838"/><rect x="13" y="13" width="1" height="1" fill="#787878"/><rect x="17" y="13" width="2" height="1" fill="#000"/><rect x="3" y="14" width="1" height="1" fill="#c0c0c0"/><rect x="5" y="14" width="1" height="1" fill="#000"/><rect x="6" y="14" width="1" height="1" fill="#a8a8a8"/><rect x="7" y="14" width="1" height="1" fill="#383838"/><rect x="9" y="14" width="1" height="1" fill="#787878"/><rect x="10" y="14" width="1" height="1" fill="#383838"/><rect x="11" y="14" width="1" height="1" fill="#a8a8a8"/><rect x="12" y="14" width="1" height="1" fill="#383838"/><rect x="13" y="14" width="1" height="1" fill="#787878"/><rect x="17" y="14" width="2" height="1" fill="#000"/><rect x="3" y="15" width="1" height="1" fill="#c0c0c0"/><rect x="5" y="15" width="1" height="1" fill="#000"/><rect x="6" y="15" width="2" height="1" fill="#383838"/><rect x="9" y="15" width="1" height="1" fill="#787878"/><rect x="10" y="15" width="3" height="1" fill="#383838"/><rect x="13" y="15" width="1" height="1" fill="#787878"/><rect x="17" y="15" width="2" height="1" fill="#000"/><rect x="3" y="16" width="1" height="1" fill="#c0c0c0"/><rect x="5" y="16" width="1" height="1" fill="#000"/><rect x="6" y="16" width="1" height="1" fill="#a8a8a8"/><rect x="7" y="16" width="1" height="1" fill="#383838"/><rect x="9" y="16" width="1" height="1" fill="#787878"/><rect x="10" y="16" width="1" height="1" fill="#383838"/><rect x="11" y="16" width="1" height="1" fill="#a8a8a8"/><rect x="12" y="16" width="1" height="1" fill="#383838"/><rect x="13" y="16" width="1" height="1" fill="#787878"/><rect x="17" y="16" width="2" height="1" fill="#000"/><rect x="5" y="17" width="3" height="1" fill="#000"/><rect x="10" y="17" width="4" height="1" fill="#000"/><rect x="17" y="17" width="2" height="1" fill="#000"/><rect x="10" y="18" width="4" height="1" fill="#000"/><rect x="16" y="18" width="1" height="1" fill="#787878"/></svg></div>
<div class="ib" style="left:958px;top:166px;background:linear-gradient(#fdfdfd 0,#f4f4f4 50%,#e0e0e0 80%,#d4d4d4 100%);border-color:#5c5c5c"><svg style="left:-1px;top:-1px" width="22" height="22" viewBox="0 0 22 22" shape-rendering="crispEdges"><rect x="3" y="3" width="16" height="1" fill="#d0d0d0"/><rect x="3" y="5" width="16" height="1" fill="#000"/><rect x="3" y="6" width="1" height="1" fill="#000"/><rect x="4" y="6" width="4" height="1" fill="#a8a8a8"/><rect x="8" y="6" width="1" height="1" fill="#000"/><rect x="9" y="6" width="4" height="1" fill="#a8a8a8"/><rect x="13" y="6" width="1" height="1" fill="#000"/><rect x="14" y="6" width="4" height="1" fill="#fff"/><rect x="18" y="6" width="1" height="1" fill="#000"/><rect x="3" y="7" width="16" height="1" fill="#000"/><rect x="3" y="8" width="1" height="1" fill="#000"/><rect x="4" y="8" width="4" height="1" fill="#a8a8a8"/><rect x="8" y="8" width="1" height="1" fill="#000"/><rect x="9" y="8" width="4" height="1" fill="#a8a8a8"/><rect x="13" y="8" width="1" height="1" fill="#000"/><rect x="14" y="8" width="4" height="1" fill="#fff"/><rect x="18" y="8" width="1" height="1" fill="#000"/><rect x="3" y="9" width="16" height="1" fill="#000"/><rect x="3" y="10" width="1" height="1" fill="#000"/><rect x="4" y="10" width="4" height="1" fill="#fff"/><rect x="8" y="10" width="1" height="1" fill="#000"/><rect x="9" y="10" width="4" height="1" fill="#fff"/><rect x="13" y="10" width="1" height="1" fill="#000"/><rect x="14" y="10" width="4" height="1" fill="#fff"/><rect x="18" y="10" width="1" height="1" fill="#000"/><rect x="3" y="11" width="16" height="1" fill="#000"/><rect x="3" y="12" width="1" height="1" fill="#000"/><rect x="4" y="12" width="4" height="1" fill="#fff"/><rect x="8" y="12" width="1" height="1" fill="#000"/><rect x="9" y="12" width="4" height="1" fill="#fff"/><rect x="13" y="12" width="1" height="1" fill="#000"/><rect x="14" y="12" width="4" height="1" fill="#fff"/><rect x="18" y="12" width="1" height="1" fill="#000"/><rect x="3" y="13" width="16" height="1" fill="#000"/><rect x="3" y="14" width="1" height="1" fill="#000"/><rect x="4" y="14" width="4" height="1" fill="#fff"/><rect x="8" y="14" width="1" height="1" fill="#000"/><rect x="9" y="14" width="4" height="1" fill="#fff"/><rect x="13" y="14" width="1" height="1" fill="#000"/><rect x="14" y="14" width="4" height="1" fill="#fff"/><rect x="18" y="14" width="1" height="1" fill="#000"/><rect x="3" y="15" width="16" height="1" fill="#000"/><rect x="2" y="17" width="18" height="1" fill="#d8d8d8"/><rect x="2" y="18" width="18" height="1" fill="#d8d8d8"/><rect x="2" y="19" width="18" height="1" fill="#d8d8d8"/></svg></div>
<div class="l" style="left:357px;top:200px;letter-spacing:0.05px">№ уведомления</div>
<div class="f " style="left:453px;top:195px;width:60px">35</div>
<div class="l" style="left:521px;top:200px;letter-spacing:0px">Дата вручения</div>
<div class="f dt" style="left:609px;top:195px;width:84px">19.07.2012</div>
<div class="b" style="left:694px;top:196px"></div>
<div class="l" style="left:734px;top:200px;letter-spacing:-0.1px">Кому вручено</div>
<div class="f g" style="left:813px;top:195px;width:168px;letter-spacing:-0.2px">Иванов М.М.</div>
<div class="l" style="left:693px;top:320px;letter-spacing:0.19px">Дата рассмотрения претензии</div>
<div class="f dt" style="left:873px;top:315px;width:84px">20.07.2012</div>
<div class="b" style="left:958px;top:316px"></div>
<div class="l" style="left:336px;top:350px;letter-spacing:0.2px">Выплачено по претензии</div>
<div class="f num" style="left:485px;top:345px;width:96px;letter-spacing:0.2px">30000,00</div>
<div class="l" style="left:584px;top:350px;letter-spacing:0.02px">№ плат. поручения</div>
<div class="f " style="left:695px;top:345px;width:46px">647</div>
<div class="l" style="left:747px;top:350px;letter-spacing:0.08px">Дата плат. поручения</div>
<div class="f dt" style="left:873px;top:345px;width:84px">25.07.2012</div>
<div class="b" style="left:958px;top:346px"></div>
<div class="ib" style="left:934px;top:376px"><svg style="left:-1px;top:-1px" width="22" height="22" viewBox="0 0 22 22" shape-rendering="crispEdges"><rect x="15" y="3" width="1" height="1" fill="#383838"/><rect x="11" y="4" width="5" height="1" fill="#000"/><rect x="3" y="5" width="6" height="1" fill="#787878"/><rect x="9" y="5" width="3" height="1" fill="#383838"/><rect x="3" y="6" width="1" height="1" fill="#c0c0c0"/><rect x="13" y="6" width="3" height="1" fill="#000"/><rect x="17" y="6" width="2" height="1" fill="#000"/><rect x="3" y="7" width="1" height="1" fill="#c0c0c0"/><rect x="5" y="7" width="8" height="1" fill="#e0e0e0"/><rect x="13" y="7" width="2" height="1" fill="#000"/><rect x="15" y="7" width="1" height="1" fill="#fff"/><rect x="17" y="7" width="2" height="1" fill="#000"/><rect x="3" y="8" width="1" height="1" fill="#c0c0c0"/><rect x="13" y="8" width="3" height="1" fill="#000"/><rect x="17" y="8" width="2" height="1" fill="#000"/><rect x="3" y="9" width="1" height="1" fill="#c0c0c0"/><rect x="9" y="9" width="4" height="1" fill="#a8a8a8"/><rect x="17" y="9" width="2" height="1" fill="#000"/><rect x="3" y="10" width="1" height="1" fill="#c0c0c0"/><rect x="5" y="10" width="3" height="1" fill="#787878"/><rect x="9" y="10" width="5" height="1" fill="#787878"/><rect x="17" y="10" width="2" height="1" fill="#000"/><rect x="3" y="11" width="1" height="1" fill="#c0c0c0"/><rect x="5" y="11" width="1" height="1" fill="#000"/><rect x="6" y="11" width="1" height="1" fill="#a8a8a8"/><rect x="7" y="11" width="1" height="1" fill="#383838"/><rect x="9" y="11" width="1" height="1" fill="#787878"/><rect x="10" y="11" width="1" height="1" fill="#383838"/><rect x="11" y="11" width="1" height="1" fill="#a8a8a8"/><rect x="12" y="11" width="1" height="1" fill="#383838"/><rect x="13" y="11" width="1" height="1" fill="#787878"/><rect x="17" y="11" width="2" height="1" fill="#000"/><rect x="3" y="12" width="1" height="1" fill="#c0c0c0"/><rect x="5" y="12" width="1" height="1" fill="#000"/><rect x="6" y="12" width="1" height="1" fill="#a8a8a8"/><rect x="7" y="12" width="1" height="1" fill="#383838"/><rect x="9" y="12" width="1" height="1" fill="#787878"/><rect x="10" y="12" width="1" height="1" fill="#383838"/><rect x="11" y="12" width="1" height="1" fill="#a8a8a8"/><rect x="12" y="12" width="1" height="1" fill="#383838"/><rect x="13" y="12" width="1" height="1" fill="#787878"/><rect x="17" y="12" width="2" height="1" fill="#000"/><rect x="3" y="13" width="1" height="1" fill="#c0c0c0"/><rect x="5" y="13" width="1" height="1" fill="#000"/><rect x="6" y="13" width="2" height="1" fill="#383838"/><rect x="9" y="13" width="1" height="1" fill="#787878"/><rect x="10" y="13" width="3" height="1" fill="#383838"/><rect x="13" y="13" width="1" height="1" fill="#787878"/><rect x="17" y="13" width="2" height="1" fill="#000"/><rect x="3" y="14" width="1" height="1" fill="#c0c0c0"/><rect x="5" y="14" width="1" height="1" fill="#000"/><rect x="6" y="14" width="1" height="1" fill="#a8a8a8"/><rect x="7" y="14" width="1" height="1" fill="#383838"/><rect x="9" y="14" width="1" height="1" fill="#787878"/><rect x="10" y="14" width="1" height="1" fill="#383838"/><rect x="11" y="14" width="1" height="1" fill="#a8a8a8"/><rect x="12" y="14" width="1" height="1" fill="#383838"/><rect x="13" y="14" width="1" height="1" fill="#787878"/><rect x="17" y="14" width="2" height="1" fill="#000"/><rect x="3" y="15" width="1" height="1" fill="#c0c0c0"/><rect x="5" y="15" width="1" height="1" fill="#000"/><rect x="6" y="15" width="2" height="1" fill="#383838"/><rect x="9" y="15" width="1" height="1" fill="#787878"/><rect x="10" y="15" width="3" height="1" fill="#383838"/><rect x="13" y="15" width="1" height="1" fill="#787878"/><rect x="17" y="15" width="2" height="1" fill="#000"/><rect x="3" y="16" width="1" height="1" fill="#c0c0c0"/><rect x="5" y="16" width="1" height="1" fill="#000"/><rect x="6" y="16" width="1" height="1" fill="#a8a8a8"/><rect x="7" y="16" width="1" height="1" fill="#383838"/><rect x="9" y="16" width="1" height="1" fill="#787878"/><rect x="10" y="16" width="1" height="1" fill="#383838"/><rect x="11" y="16" width="1" height="1" fill="#a8a8a8"/><rect x="12" y="16" width="1" height="1" fill="#383838"/><rect x="13" y="16" width="1" height="1" fill="#787878"/><rect x="17" y="16" width="2" height="1" fill="#000"/><rect x="5" y="17" width="3" height="1" fill="#000"/><rect x="10" y="17" width="4" height="1" fill="#000"/><rect x="17" y="17" width="2" height="1" fill="#000"/><rect x="10" y="18" width="4" height="1" fill="#000"/><rect x="16" y="18" width="1" height="1" fill="#787878"/></svg></div>
<div class="ib" style="left:958px;top:376px;background:linear-gradient(#fdfdfd 0,#f4f4f4 50%,#e0e0e0 80%,#d4d4d4 100%);border-color:#5c5c5c"><svg style="left:-1px;top:-1px" width="22" height="22" viewBox="0 0 22 22" shape-rendering="crispEdges"><rect x="3" y="3" width="16" height="1" fill="#d0d0d0"/><rect x="3" y="5" width="16" height="1" fill="#000"/><rect x="3" y="6" width="1" height="1" fill="#000"/><rect x="4" y="6" width="4" height="1" fill="#a8a8a8"/><rect x="8" y="6" width="1" height="1" fill="#000"/><rect x="9" y="6" width="4" height="1" fill="#a8a8a8"/><rect x="13" y="6" width="1" height="1" fill="#000"/><rect x="14" y="6" width="4" height="1" fill="#fff"/><rect x="18" y="6" width="1" height="1" fill="#000"/><rect x="3" y="7" width="16" height="1" fill="#000"/><rect x="3" y="8" width="1" height="1" fill="#000"/><rect x="4" y="8" width="4" height="1" fill="#a8a8a8"/><rect x="8" y="8" width="1" height="1" fill="#000"/><rect x="9" y="8" width="4" height="1" fill="#a8a8a8"/><rect x="13" y="8" width="1" height="1" fill="#000"/><rect x="14" y="8" width="4" height="1" fill="#fff"/><rect x="18" y="8" width="1" height="1" fill="#000"/><rect x="3" y="9" width="16" height="1" fill="#000"/><rect x="3" y="10" width="1" height="1" fill="#000"/><rect x="4" y="10" width="4" height="1" fill="#fff"/><rect x="8" y="10" width="1" height="1" fill="#000"/><rect x="9" y="10" width="4" height="1" fill="#fff"/><rect x="13" y="10" width="1" height="1" fill="#000"/><rect x="14" y="10" width="4" height="1" fill="#fff"/><rect x="18" y="10" width="1" height="1" fill="#000"/><rect x="3" y="11" width="16" height="1" fill="#000"/><rect x="3" y="12" width="1" height="1" fill="#000"/><rect x="4" y="12" width="4" height="1" fill="#fff"/><rect x="8" y="12" width="1" height="1" fill="#000"/><rect x="9" y="12" width="4" height="1" fill="#fff"/><rect x="13" y="12" width="1" height="1" fill="#000"/><rect x="14" y="12" width="4" height="1" fill="#fff"/><rect x="18" y="12" width="1" height="1" fill="#000"/><rect x="3" y="13" width="16" height="1" fill="#000"/><rect x="3" y="14" width="1" height="1" fill="#000"/><rect x="4" y="14" width="4" height="1" fill="#fff"/><rect x="8" y="14" width="1" height="1" fill="#000"/><rect x="9" y="14" width="4" height="1" fill="#fff"/><rect x="13" y="14" width="1" height="1" fill="#000"/><rect x="14" y="14" width="4" height="1" fill="#fff"/><rect x="18" y="14" width="1" height="1" fill="#000"/><rect x="3" y="15" width="16" height="1" fill="#000"/><rect x="2" y="17" width="18" height="1" fill="#d8d8d8"/><rect x="2" y="18" width="18" height="1" fill="#d8d8d8"/><rect x="2" y="19" width="18" height="1" fill="#d8d8d8"/></svg></div>
<div class="l" style="left:357px;top:516px;letter-spacing:0.08px">№ иска</div>
<div class="f g" style="left:405px;top:513px;width:96px">757</div>
<div class="l" style="left:513px;top:518px;letter-spacing:0.09px">Дата рассмотрения иска в суде</div>
<div class="f g" style="left:705px;top:513px;width:96px;padding-left:10px">.&nbsp; .</div>
<div class="b" style="left:802px;top:514px"></div>
<div class="a" style="left:344px;top:615px;width:13px;height:1px;background:#505050"></div>
<div class="a" style="left:357px;top:610px;width:13px;height:13px;border:1px solid #8c8c8c;background:#f2f2f2"><svg style="left:1px;top:1px" width="10" height="10" viewBox="0 0 10 10"><path d="M2 5 L4 8 L8.5 1.5" stroke="#3c50a0" stroke-width="1.6" fill="none"/></svg></div>
<div class="a" style="left:371px;top:608px;width:58px;height:17px;border:1px dotted #4a4a20;font-weight:bold;font-size:12px;letter-spacing:-0.45px;color:#0000ff;line-height:17px;padding-left:2px">Контроль</div>
<div class="pb" style="left:446px;top:605px;width:33px;height:21px"><div class="a" style="left:12px;top:3px;width:0;height:0;border-top:7px solid transparent;border-bottom:7px solid transparent;border-right:7px solid #000080"></div></div>
<div class="pb" style="left:486px;top:605px;width:33px;height:21px"><div class="a" style="left:11px;top:3px;width:0;height:0;border-top:7px solid transparent;border-bottom:7px solid transparent;border-left:7px solid #000080"></div></div>
<div class="pb" style="left:526px;top:605px;width:117px;height:21px;letter-spacing:0.17px;padding-right:2px">Фото претензии</div>
<div class="pb" style="left:650px;top:605px;width:117px;height:21px;letter-spacing:-0.1px;padding-right:1px">Файлы Office</div>
<div class="pb" style="left:774px;top:605px;width:33px;height:21px"><svg style="left:7px;top:1px" width="17" height="15" viewBox="0 0 17 15" shape-rendering="crispEdges"><rect x="6" y="0" width="8" height="1" fill="#000"/><rect x="5" y="1" width="1" height="1" fill="#000"/><rect x="6" y="1" width="7" height="1" fill="#fff"/><rect x="13" y="1" width="1" height="1" fill="#000"/><rect x="5" y="2" width="1" height="1" fill="#000"/><rect x="6" y="2" width="1" height="1" fill="#fff"/><rect x="7" y="2" width="4" height="1" fill="#000"/><rect x="11" y="2" width="2" height="1" fill="#fff"/><rect x="13" y="2" width="1" height="1" fill="#000"/><rect x="4" y="3" width="1" height="1" fill="#000"/><rect x="5" y="3" width="8" height="1" fill="#fff"/><rect x="13" y="3" width="3" height="1" fill="#000"/><rect x="4" y="4" width="1" height="1" fill="#000"/><rect x="5" y="4" width="1" height="1" fill="#fff"/><rect x="6" y="4" width="4" height="1" fill="#000"/><rect x="10" y="4" width="2" height="1" fill="#fff"/><rect x="12" y="4" width="1" height="1" fill="#000"/><rect x="13" y="4" width="1" height="1" fill="#fff"/><rect x="14" y="4" width="3" height="1" fill="#000"/><rect x="3" y="5" width="11" height="1" fill="#000"/><rect x="14" y="5" width="1" height="1" fill="#fff"/><rect x="15" y="5" width="2" height="1" fill="#000"/><rect x="2" y="6" width="13" height="1" fill="#000"/><rect x="15" y="6" width="1" height="1" fill="#fff"/><rect x="16" y="6" width="1" height="1" fill="#000"/><rect x="1" y="7" width="2" height="1" fill="#000"/><rect x="3" y="7" width="10" height="1" fill="#909090"/><rect x="13" y="7" width="1" height="1" fill="#000"/><rect x="14" y="7" width="1" height="1" fill="#fff"/><rect x="15" y="7" width="2" height="1" fill="#000"/><rect x="0" y="8" width="16" height="1" fill="#000"/><rect x="0" y="9" width="1" height="1" fill="#000"/><rect x="1" y="9" width="12" height="1" fill="#909090"/><rect x="13" y="9" width="1" height="1" fill="#000"/><rect x="14" y="9" width="1" height="1" fill="#fff"/><rect x="15" y="9" width="1" height="1" fill="#000"/><rect x="0" y="10" width="1" height="1" fill="#000"/><rect x="1" y="10" width="7" height="1" fill="#909090"/><rect x="8" y="10" width="3" height="1" fill="#000"/><rect x="11" y="10" width="2" height="1" fill="#909090"/><rect x="13" y="10" width="2" height="1" fill="#000"/><rect x="0" y="11" width="1" height="1" fill="#000"/><rect x="1" y="11" width="7" height="1" fill="#909090"/><rect x="8" y="11" width="3" height="1" fill="#fff"/><rect x="11" y="11" width="2" height="1" fill="#909090"/><rect x="13" y="11" width="1" height="1" fill="#000"/><rect x="14" y="11" width="1" height="1" fill="#fff"/><rect x="0" y="12" width="15" height="1" fill="#000"/><rect x="1" y="13" width="2" height="1" fill="#000"/><rect x="3" y="13" width="10" height="1" fill="#7a7a7a"/><rect x="13" y="13" width="1" height="1" fill="#000"/><rect x="14" y="13" width="1" height="1" fill="#fff"/><rect x="15" y="13" width="1" height="1" fill="#000"/><rect x="2" y="14" width="12" height="1" fill="#000"/></svg></div>
<div class="a" style="left:806px;top:614px;width:8px;height:1px;background:#505050"></div>
<div class="a" style="left:814px;top:609px;width:13px;height:13px;border:1px solid #303030;background:#fff"><svg style="left:0px;top:0px" width="11" height="11" viewBox="0 0 11 11"><path d="M1.5 5.5 L4 8.5 L9.5 1.5" stroke="#202020" stroke-width="1.3" fill="none"/></svg></div>
<div class="l" style="left:830px;top:609px;letter-spacing:0.1px">Просмотр</div>
<div class="a" style="left:814px;top:627px;width:13px;height:13px;border:1px solid #303030;background:#fff"></div>
<div class="l" style="left:830px;top:627px;letter-spacing:0px">B Word</div>
<div class="pb" style="left:899px;top:604px;width:82px;height:46px"><svg style="left:32px;top:8px" width="16" height="15" viewBox="0 0 16 15" shape-rendering="crispEdges"><rect x="1" y="0" width="8" height="1" fill="#000"/><rect x="10" y="0" width="6" height="1" fill="#cfcfcf"/><rect x="1" y="1" width="2" height="1" fill="#000"/><rect x="3" y="1" width="5" height="1" fill="#fff"/><rect x="8" y="1" width="1" height="1" fill="#000"/><rect x="10" y="1" width="6" height="1" fill="#cfcfcf"/><rect x="1" y="2" width="1" height="1" fill="#000"/><rect x="2" y="2" width="1" height="1" fill="#a4a400"/><rect x="3" y="2" width="1" height="1" fill="#000"/><rect x="4" y="2" width="4" height="1" fill="#fff"/><rect x="8" y="2" width="1" height="1" fill="#000"/><rect x="10" y="2" width="3" height="1" fill="#cfcfcf"/><rect x="13" y="2" width="1" height="1" fill="#0000b0"/><rect x="14" y="2" width="2" height="1" fill="#cfcfcf"/><rect x="1" y="3" width="1" height="1" fill="#000"/><rect x="2" y="3" width="2" height="1" fill="#a4a400"/><rect x="4" y="3" width="1" height="1" fill="#000"/><rect x="5" y="3" width="3" height="1" fill="#fff"/><rect x="8" y="3" width="1" height="1" fill="#000"/><rect x="10" y="3" width="2" height="1" fill="#cfcfcf"/><rect x="12" y="3" width="2" height="1" fill="#0000b0"/><rect x="14" y="3" width="2" height="1" fill="#cfcfcf"/><rect x="1" y="4" width="1" height="1" fill="#000"/><rect x="2" y="4" width="3" height="1" fill="#a4a400"/><rect x="5" y="4" width="1" height="1" fill="#000"/><rect x="6" y="4" width="2" height="1" fill="#fff"/><rect x="8" y="4" width="1" height="1" fill="#000"/><rect x="10" y="4" width="1" height="1" fill="#cfcfcf"/><rect x="11" y="4" width="5" height="1" fill="#0000b0"/><rect x="1" y="5" width="1" height="1" fill="#000"/><rect x="2" y="5" width="3" height="1" fill="#a4a400"/><rect x="5" y="5" width="1" height="1" fill="#000"/><rect x="6" y="5" width="2" height="1" fill="#fff"/><rect x="8" y="5" width="1" height="1" fill="#000"/><rect x="10" y="5" width="6" height="1" fill="#0000b0"/><rect x="1" y="6" width="1" height="1" fill="#000"/><rect x="2" y="6" width="3" height="1" fill="#a4a400"/><rect x="5" y="6" width="1" height="1" fill="#000"/><rect x="6" y="6" width="2" height="1" fill="#fff"/><rect x="8" y="6" width="1" height="1" fill="#000"/><rect x="10" y="6" width="1" height="1" fill="#cfcfcf"/><rect x="11" y="6" width="5" height="1" fill="#0000b0"/><rect x="1" y="7" width="1" height="1" fill="#000"/><rect x="2" y="7" width="3" height="1" fill="#a4a400"/><rect x="5" y="7" width="1" height="1" fill="#000"/><rect x="6" y="7" width="2" height="1" fill="#fff"/><rect x="8" y="7" width="1" height="1" fill="#000"/><rect x="10" y="7" width="2" height="1" fill="#cfcfcf"/><rect x="12" y="7" width="2" height="1" fill="#0000b0"/><rect x="14" y="7" width="2" height="1" fill="#cfcfcf"/><rect x="1" y="8" width="1" height="1" fill="#000"/><rect x="2" y="8" width="2" height="1" fill="#a4a400"/><rect x="4" y="8" width="2" height="1" fill="#000"/><rect x="6" y="8" width="2" height="1" fill="#fff"/><rect x="8" y="8" width="1" height="1" fill="#000"/><rect x="10" y="8" width="3" height="1" fill="#cfcfcf"/><rect x="13" y="8" width="1" height="1" fill="#0000b0"/><rect x="14" y="8" width="2" height="1" fill="#cfcfcf"/><rect x="1" y="9" width="1" height="1" fill="#000"/><rect x="2" y="9" width="3" height="1" fill="#a4a400"/><rect x="5" y="9" width="1" height="1" fill="#000"/><rect x="6" y="9" width="2" height="1" fill="#fff"/><rect x="8" y="9" width="1" height="1" fill="#000"/><rect x="10" y="9" width="6" height="1" fill="#cfcfcf"/><rect x="0" y="10" width="2" height="1" fill="#000"/><rect x="2" y="10" width="3" height="1" fill="#a4a400"/><rect x="5" y="10" width="8" height="1" fill="#000"/><rect x="13" y="10" width="3" height="1" fill="#cfcfcf"/><rect x="0" y="11" width="1" height="1" fill="#cfcfcf"/><rect x="1" y="11" width="1" height="1" fill="#000"/><rect x="2" y="11" width="3" height="1" fill="#a4a400"/><rect x="5" y="11" width="1" height="1" fill="#000"/><rect x="6" y="11" width="10" height="1" fill="#cfcfcf"/><rect x="0" y="12" width="2" height="1" fill="#cfcfcf"/><rect x="2" y="12" width="1" height="1" fill="#000"/><rect x="3" y="12" width="2" height="1" fill="#a4a400"/><rect x="5" y="12" width="1" height="1" fill="#000"/><rect x="6" y="12" width="10" height="1" fill="#cfcfcf"/><rect x="0" y="13" width="3" height="1" fill="#cfcfcf"/><rect x="3" y="13" width="1" height="1" fill="#000"/><rect x="4" y="13" width="1" height="1" fill="#a4a400"/><rect x="5" y="13" width="1" height="1" fill="#000"/><rect x="6" y="13" width="10" height="1" fill="#cfcfcf"/><rect x="0" y="14" width="4" height="1" fill="#cfcfcf"/><rect x="4" y="14" width="2" height="1" fill="#000"/><rect x="6" y="14" width="10" height="1" fill="#cfcfcf"/></svg></div>
<div class="a" style="left:917px;top:633px;font-weight:bold;font-size:13px;color:#0000ff;text-decoration:underline;line-height:15px">Выход</div>
<div class="a" style="left:225px;top:651px;width:24px;height:12px;background:#80ff80;border:1px solid #b0a8b8;box-shadow:inset 0 0 0 1px #c0c8f0"></div>
<div class="l" style="left:256px;top:650px;letter-spacing:0px">-</div>
<div class="l" style="left:265px;top:650px;letter-spacing:0.21px">Поля с заполнением из справочников</div>
</body></html>
